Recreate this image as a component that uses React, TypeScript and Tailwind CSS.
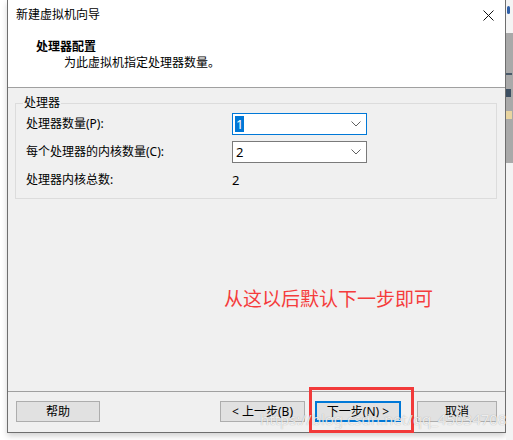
import React from 'react';

const font = { fontFamily: '"Noto Sans", "Noto Sans CJK SC", sans-serif' };

const Chevron = () => (
  <svg width="10" height="6" viewBox="0 0 10 6" className="text-[#606060]">
    <path d="M0.5 0.5 L5 5 L9.5 0.5" fill="none" stroke="currentColor" strokeWidth="1" />
  </svg>
);

const Combo: React.FC<{ value: string; focused?: boolean }> = ({ value, focused }) => (
  <div
    className={
      focused
        ? 'w-[135px] h-[22px] bg-white border border-[#0078d7] flex items-center justify-between pl-[2px] pr-[5px]'
        : 'w-[135px] h-[22px] bg-white border border-[#7a7a7a] flex items-center justify-between pl-[2px] pr-[5px]'
    }
  >
    {focused ? (
      <span className="bg-[#0078d7] text-white text-[13px] leading-[16px] px-[1px]">{value}</span>
    ) : (
      <span className="text-[13px] leading-[16px] px-[1px]">{value}</span>
    )}
    <Chevron />
  </div>
);

const WinButton: React.FC<{ label: string; width: string; primary?: boolean }> = ({ label, width, primary }) => (
  <div
    className={
      (primary
        ? 'border-2 border-[#0078d7] '
        : 'border border-[#adadad] ') +
      width +
      ' h-[21px] bg-[#e1e1e1] flex items-center justify-center text-[12px] leading-[14px] text-black'
    }
  >
    {label}
  </div>
);

export default function App() {
  return (
    <div className="relative w-[513px] h-[440px] bg-white flex overflow-hidden text-black" style={font}>
      {/* dialog window */}
      <div className="ml-[7px] w-[499px] h-[433px] border-x border-b border-[#6e6e6e] flex flex-col shadow-[0_3px_6px_rgba(0,0,0,0.18)]">
        {/* header */}
        <div className="h-[88px] bg-white border-b border-[#a0a0a0] flex flex-col">
          <div className="h-[30px] flex items-center justify-between pl-[8px] pr-[11px]">
            <span className="text-[12px] leading-[16px]">新建虚拟机向导</span>
            <svg width="11" height="11" viewBox="0 0 11 11">
              <path d="M0.5 0.5 L10.5 10.5 M10.5 0.5 L0.5 10.5" stroke="#111" strokeWidth="1" />
            </svg>
          </div>
          <div className="mt-[9px] pl-[28px] text-[12px] leading-[16px] font-bold">处理器配置</div>
          <div className="pl-[56px] text-[12px] leading-[16px]">为此虚拟机指定处理器数量。</div>
        </div>

        {/* body */}
        <div className="flex-1 bg-[#f0f0f0] pl-[7px] pr-[8px] flex flex-col">
          <fieldset className="mt-[8px] border border-[#dcdcdc] pl-[10px] pb-[7px]">
            <legend className="ml-[-3px] px-[1px] text-[12px] leading-[14px]">处理器</legend>
            <div className="grid grid-cols-[206px_135px] gap-y-[6px] pt-[3px] text-[12px] leading-[16px]">
              <div className="flex items-center">处理器数量(P):</div>
              <Combo value="1" focused />
              <div className="flex items-center">每个处理器的内核数量(C):</div>
              <Combo value="2" />
              <div className="h-[22px] flex items-center">处理器内核总数:</div>
              <div className="h-[22px] flex items-center text-[13px]">2</div>
            </div>
          </fieldset>
          <div className="mt-[88px] ml-[209px] text-[19px] leading-[24px] text-[#f53c3c]">从这以后默认下一步即可</div>
        </div>

        {/* footer */}
        <div className="h-[41px] bg-[#f0f0f0] border-t border-[#a0a0a0] pt-[9px] pl-[8px] pr-[8px] flex items-start">
          <WinButton label="帮助" width="w-[85px]" />
          <div className="ml-[120px] flex items-start">
            <WinButton label="< 上一步(B)" width="w-[85px]" />
            <div className="ml-[10px]">
              <WinButton label="下一步(N) >" width="w-[86px]" primary />
            </div>
            <div className="ml-[16px]">
              <WinButton label="取消" width="w-[80px]" />
            </div>
          </div>
        </div>
      </div>

      {/* background window peeking on the right */}
      <div className="flex-1 flex flex-col">
        <div className="h-[33px] bg-[#f4f4f4] flex items-start pt-[6px] pl-[1px]">
          <div className="w-[3px] h-[8px] rounded-[2px] bg-[#2f5fa8]" />
        </div>
        <div className="h-[130px] bg-[#a9a9a9] flex flex-col items-start pt-[40px] gap-[14px]">
          <div className="w-[6px] h-[2px] bg-[#4a5a6a]" />
          <div className="w-[5px] h-[8px] bg-[#3d4f62]" />
          <div className="w-[6px] h-[8px] bg-[#e8d4a0]" />
        </div>
        <div className="flex-1 bg-[#f3f3f3]" />
      </div>

      {/* annotation: red highlight box */}
      <div className="absolute left-[309px] top-[387px] w-[105px] h-[46px] border-[3px] border-[#f23a3a]" />

      {/* watermark */}
      <div className="absolute left-[260px] top-[409px] text-[15px] leading-[20px] text-white/80 [text-shadow:0_0_1px_rgba(0,0,0,0.35)]">
        https://blog.csdn.net/qq_45034708
      </div>
    </div>
  );
}
